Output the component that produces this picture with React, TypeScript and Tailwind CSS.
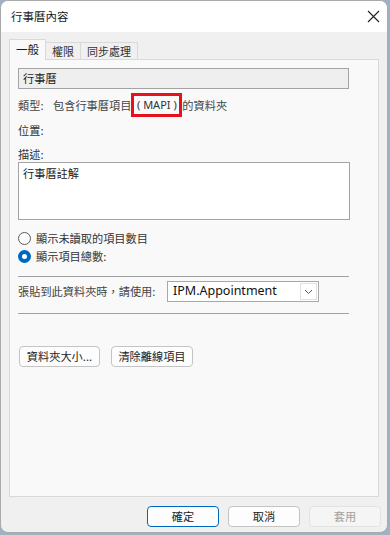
const font = { fontFamily: '"Noto Sans CJK TC", "Noto Sans", sans-serif' };

function Tab({ label, active }: { label: string; active?: boolean }) {
  if (active) {
    return (
      <div className="relative z-10 -mb-px flex h-[21px] w-[37px] items-center justify-center border border-b-0 border-[#d9d9d9] bg-[#f9f9f9] text-[11.5px] text-[#1a1a1a]">
        {label}
      </div>
    );
  }
  return (
    <div className="mt-[3px] -ml-px flex h-[17px] items-center justify-center border border-b-0 border-[#d9d9d9] bg-[#f0f0f0] px-[6px] text-[11px] text-[#333]">
      {label}
    </div>
  );
}

function Radio({ label, checked }: { label: string; checked?: boolean }) {
  return (
    <div className="flex h-[16px] items-center gap-[5px]">
      {checked ? (
        <span className="flex h-[13px] w-[13px] items-center justify-center rounded-full bg-[#0067c0]">
          <span className="h-[5px] w-[5px] rounded-full bg-white" />
        </span>
      ) : (
        <span className="h-[13px] w-[13px] rounded-full border border-[#5a5a5a] bg-[#fbfbfb]" />
      )}
      <span className="text-[11.2px] text-[#333]">{label}</span>
    </div>
  );
}

function Button({ label, className }: { label: string; className?: string }) {
  return (
    <div
      className={
        "flex h-[21px] items-center justify-center rounded-[4px] border text-[11.2px] " +
        (className ?? "")
      }
    >
      {label}
    </div>
  );
}

export default function App() {
  return (
    <div className="h-[535px] w-[390px] bg-[#9fb1c2]" style={font}>
      <div className="flex h-[533px] w-[388px] flex-col overflow-hidden rounded-[8px] border border-[#aaaaaa] bg-[#f0f0f0]">
        <div className="flex h-[31px] shrink-0 items-center justify-between bg-white pl-[10px] pr-[7px]">
          <span className="text-[11.5px] text-[#1a1a1a]">行事曆內容</span>
          <svg width="13" height="13" viewBox="0 0 13 13">
            <path d="M1 1 L12 12 M12 1 L1 12" stroke="#222" strokeWidth="1.1" fill="none" />
          </svg>
        </div>

        <div className="mt-[7px] flex pl-[8px]">
          <Tab label="一般" active />
          <Tab label="權限" />
          <Tab label="同步處理" />
        </div>

        <div className="mx-[8px] flex h-[438px] flex-col border border-[#d9d9d9] bg-[#f9f9f9] pl-[8px]">
          <div className="mt-[8px] flex h-[21px] w-[331px] items-center border border-[#a3a3a3] bg-[#efefef] pl-[4px] text-[11.2px] text-[#222]">
            行事曆
          </div>

          <div className="mt-[4px] flex h-[24px] items-center text-[11.2px] text-[#444]">
            <span className="w-[35px]">類型:</span>
            <span>包含行事曆項目</span>
            <span
              className="flex h-[24px] w-[51px] items-center justify-center whitespace-pre border-[3px] border-[#e8101a] text-[11px] text-[#333]"
              style={{ fontFamily: '"Noto Sans", sans-serif' }}
            >
              {"( MAPI )"}
            </span>
            <span>的資料夾</span>
          </div>

          <div className="mt-[5px] h-[16px] text-[11.2px] leading-[16px] text-[#333]">位置:</div>
          <div className="mt-[8px] h-[16px] text-[11.2px] leading-[16px] text-[#333]">描述:</div>

          <div className="h-[58px] w-[332px] border border-[#a3a3a3] bg-white px-[4px] pt-[2px] text-[11.2px] text-[#222]">
            行事曆註解
          </div>

          <div className="mt-[10px] flex flex-col gap-[2px]">
            <Radio label="顯示未讀取的項目數目" />
            <Radio label="顯示項目總數:" checked />
          </div>

          <div className="mt-[12px] h-px w-[331px] bg-[#a0a0a0]" />

          <div className="mt-[4px] flex h-[21px] items-center">
            <span className="w-[149px] text-[11.2px] text-[#444]">張貼到此資料夾時，請使用:</span>
            <div className="flex h-[21px] w-[152px] items-center justify-between border border-[#a8a8a8] bg-white pl-[5px] pr-[1px]">
              <span className="text-[12.5px] text-[#111]" style={{ fontFamily: '"Noto Sans", sans-serif' }}>
                IPM.Appointment
              </span>
              <span className="flex h-[17px] w-[17px] items-center justify-center border border-[#e2e2e2] bg-white">
                <svg width="9" height="6" viewBox="0 0 9 6">
                  <path d="M1 1 L4.5 4.5 L8 1" stroke="#555" strokeWidth="1" fill="none" />
                </svg>
              </span>
            </div>
          </div>

          <div className="mt-[11px] h-px w-[331px] bg-[#a0a0a0]" />

          <div className="mt-[32px] flex gap-[11px] pl-px">
            <Button label="資料夾大小..." className="w-[81px] border-[#c4c4c4] bg-[#fdfdfd] text-[#222]" />
            <Button label="清除離線項目" className="w-[82px] border-[#c4c4c4] bg-[#fdfdfd] text-[#222]" />
          </div>
        </div>

        <div className="mt-[9px] flex justify-end gap-[9px] pr-[6px]">
          <Button label="確定" className="w-[72px] border-[#0067c0] bg-[#fdfdfd] text-[#222]" />
          <Button label="取消" className="w-[72px] border-[#c4c4c4] bg-[#fdfdfd] text-[#222]" />
          <Button label="套用" className="w-[72px] border-[#e2e2e2] bg-[#f5f5f5] text-[#a0a0a0]" />
        </div>
      </div>
    </div>
  );
}
